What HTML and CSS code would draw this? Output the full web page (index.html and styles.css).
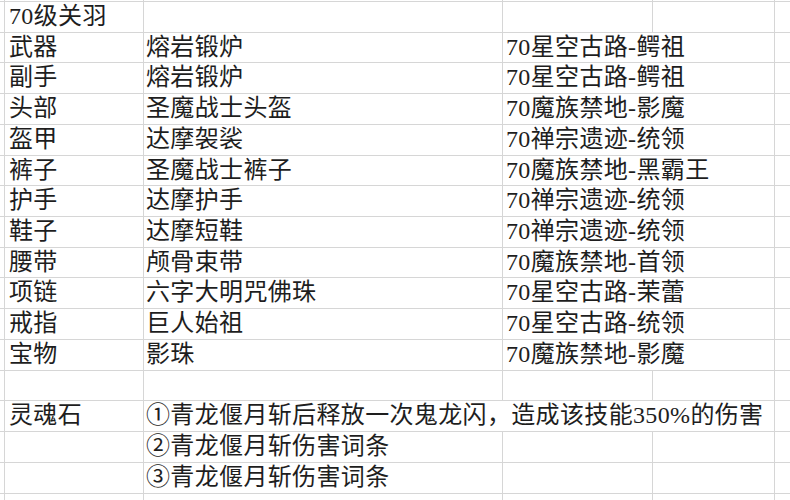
FILE: index.html
```html
<!DOCTYPE html>
<html lang="zh-CN">
<head>
<meta charset="utf-8">
<title>70级关羽</title>
<link rel="stylesheet" href="styles.css">
</head>
<body>
<div class="sheet">
  <div class="c edge"></div><div class="c"></div><div class="c"></div><div class="c"></div><div class="c"></div><div class="c"></div>

  <div class="c edge"></div><div class="c a">70级关羽</div><div class="c b"></div><div class="c"></div><div class="c"></div><div class="c"></div>

  <div class="c edge"></div><div class="c a">武器</div><div class="c b">熔岩锻炉</div><div class="c cc span2">70星空古路-鳄祖</div><div class="c"></div>
  <div class="c edge"></div><div class="c a">副手</div><div class="c b">熔岩锻炉</div><div class="c cc span2">70星空古路-鳄祖</div><div class="c"></div>
  <div class="c edge"></div><div class="c a">头部</div><div class="c b">圣魔战士头盔</div><div class="c cc span2">70魔族禁地-影魔</div><div class="c"></div>
  <div class="c edge"></div><div class="c a">盔甲</div><div class="c b">达摩袈裟</div><div class="c cc span2">70禅宗遗迹-统领</div><div class="c"></div>
  <div class="c edge"></div><div class="c a">裤子</div><div class="c b">圣魔战士裤子</div><div class="c cc span2">70魔族禁地-黑霸王</div><div class="c"></div>
  <div class="c edge"></div><div class="c a">护手</div><div class="c b">达摩护手</div><div class="c cc span2">70禅宗遗迹-统领</div><div class="c"></div>
  <div class="c edge"></div><div class="c a">鞋子</div><div class="c b">达摩短鞋</div><div class="c cc span2">70禅宗遗迹-统领</div><div class="c"></div>
  <div class="c edge"></div><div class="c a">腰带</div><div class="c b">颅骨束带</div><div class="c cc span2">70魔族禁地-首领</div><div class="c"></div>
  <div class="c edge"></div><div class="c a">项链</div><div class="c b">六字大明咒佛珠</div><div class="c cc span2">70星空古路-茉蕾</div><div class="c"></div>
  <div class="c edge"></div><div class="c a">戒指</div><div class="c b">巨人始祖</div><div class="c cc span2">70星空古路-统领</div><div class="c"></div>
  <div class="c edge"></div><div class="c a">宝物</div><div class="c b">影珠</div><div class="c cc span2">70魔族禁地-影魔</div><div class="c"></div>

  <div class="c edge"></div><div class="c"></div><div class="c"></div><div class="c"></div><div class="c"></div><div class="c"></div>

  <div class="c edge"></div><div class="c a">灵魂石</div><div class="c b span3">①青龙偃月斩后释放一次鬼龙闪，造成该技能350%的伤害</div><div class="c"></div>
  <div class="c edge"></div><div class="c a"></div><div class="c b">②青龙偃月斩伤害词条</div><div class="c"></div><div class="c"></div><div class="c"></div>
  <div class="c edge"></div><div class="c a"></div><div class="c b">③青龙偃月斩伤害词条</div><div class="c"></div><div class="c"></div><div class="c"></div>

  <div class="c edge"></div><div class="c"></div><div class="c"></div><div class="c"></div><div class="c"></div><div class="c"></div>
</div>
</body>
</html>
```

FILE: styles.css
```css
html, body {
  margin: 0;
  padding: 0;
  background: #ffffff;
}

body {
  width: 790px;
  height: 500px;
  overflow: hidden;
}

.sheet {
  display: grid;
  grid-template-columns: 4px 138px 358px 149px 121px 40px;
  grid-template-rows: 1px repeat(17, 29.73px);
  gap: 1px;
  background: #d6d6d6;
  width: 815px;
  font-family: "Liberation Serif", "Noto Sans CJK SC", serif;
  font-size: 24px;
  font-weight: 400;
  letter-spacing: 0.35px;
  color: #1e1e1e;
}

.c {
  background: #ffffff;
  white-space: nowrap;
  overflow: hidden;
  line-height: 29.73px;
}

.a {
  padding-left: 4px;
}

.b {
  padding-left: 2px;
}

.cc {
  padding-left: 3px;
}

.span2 {
  grid-column: span 2;
}

.span3 {
  grid-column: span 3;
}
```
